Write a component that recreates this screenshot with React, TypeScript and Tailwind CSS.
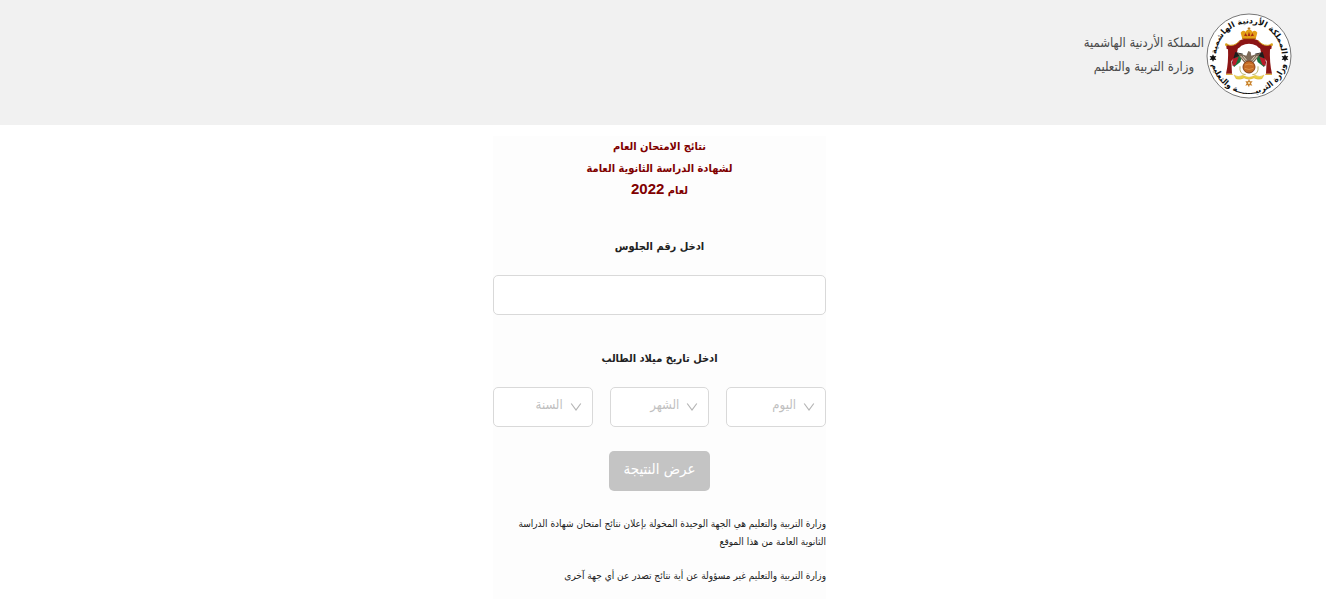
import { useState } from "react";

const days = Array.from({ length: 31 }, (_, i) => i + 1);
const months = Array.from({ length: 12 }, (_, i) => i + 1);
const years = Array.from({ length: 60 }, (_, i) => 2006 - i);

function Emblem() {
  return (
    <svg viewBox="0 0 258 258" className="size-[86px] shrink-0" role="img" aria-label="شعار المملكة">
      <defs>
        <path id="ring-top" d="M31 129 A98 98 0 0 1 227 129" />
        <path id="ring-bottom" d="M15 129 A114 114 0 0 0 243 129" />
      </defs>
      <circle cx="129" cy="129" r="126" fill="#fff" stroke="#777" strokeWidth="3" />
      <g fill="#111" fontFamily="DejaVu Sans, sans-serif" fontWeight="700" fontSize="24" textAnchor="middle">
        <text>
          <textPath href="#ring-top" startOffset="50%">
            المملكة الأردنية الهاشمية
          </textPath>
        </text>
        <text>
          <textPath href="#ring-bottom" startOffset="50%">
            وزارة التربيـــــــة والتعليم
          </textPath>
        </text>
      </g>
      <g fill="#111">
        <path d="M21 124l3 6 7-1-4 6 4 6-7-1-3 6-3-6-7 1 4-6-4-6 7 1Z" />
        <path d="M237 124l3 6 7-1-4 6 4 6-7-1-3 6-3-6-7 1 4-6-4-6 7 1Z" />
      </g>
      {/* mantle */}
      <path d="M60 94Q86 104 102 82Q129 70 156 82Q172 104 198 94L196 108Q166 116 152 98Q129 86 106 98Q92 116 62 108Z" fill="#8c1515" />
      <path d="M66 106Q86 110 96 102Q94 128 76 144L78 182H60Q68 150 66 106Z" fill="#8c1515" />
      <path d="M192 106Q172 110 162 102Q164 128 182 144L180 182H198Q190 150 192 106Z" fill="#8c1515" />
      <path d="M60 94Q86 104 102 82M198 94Q172 104 156 82M60 184h20M178 184h20" fill="none" stroke="#d9a21b" strokeWidth="3" />
      <circle cx="61" cy="95" r="4" fill="#d9a21b" />
      <circle cx="197" cy="95" r="4" fill="#d9a21b" />
      {/* crown */}
      <path d="M109 78L104 59Q110 49 119 56Q124 48 129 50Q134 48 139 56Q148 49 154 59L149 78Z" fill="#e3a018" />
      <path d="M114 68L119 60L124 70ZM144 68L139 60L134 70ZM129 56L133 69H125Z" fill="#a72a14" />
      <path d="M129 43v8M125 46h8M109 77h40" stroke="#b36b0b" strokeWidth="3" />
      {/* flags and eagle */}
      <path d="M88 117L111 122L98 137L84 162L78 149Z" fill="#1d1d1d" />
      <path d="M87 134L110 124L103 147L84 162Z" fill="#17733c" />
      <path d="M80 137L98 131L89 155L79 158Z" fill="#b91c2a" />
      <path d="M170 117L147 122L160 137L174 162L180 149Z" fill="#1d1d1d" />
      <path d="M171 134L148 124L155 147L174 162Z" fill="#17733c" />
      <path d="M178 137L160 131L169 155L179 158Z" fill="#b91c2a" />
      <path d="M94 119L121 128L127 114L134 117L136 128L164 119L153 137L140 152H118L105 137Z" fill="#7d6a58" />
      <path d="M104 129L119 146M154 129L139 146M112 130L122 142M146 130L136 142" stroke="#e6d9c4" strokeWidth="3" />
      <circle cx="129" cy="162" r="18" fill="#c46b25" stroke="#86431c" strokeWidth="3" />
      <path d="M117 156Q129 150 141 156M116 166Q129 173 142 166" fill="none" stroke="#e6a35b" strokeWidth="2" />
      <path d="M102 160Q99 184 119 185M156 160Q159 184 139 185" fill="none" stroke="#b9b46a" strokeWidth="3" />
      {/* ribbon and star */}
      <path d="M84 186Q96 195 110 187Q129 198 148 187Q162 195 174 186L168 197Q154 201 144 195Q129 203 114 195Q104 201 90 197Z" fill="#ead044" stroke="#c99e22" strokeWidth="1" />
      <path d="M129 198L132 205L140 205L135 211L139 218L131 216L129 223L125 216L118 218L122 211L118 205L126 205Z" fill="#c9822d" />
      <circle cx="129" cy="210" r="3" fill="#fff3c4" />
    </svg>
  );
}

type DateSelectProps = {
  label: string;
  options: number[];
  value: string;
  onChange: (value: string) => void;
};

function DateSelect({ label, options, value, onChange }: DateSelectProps) {
  return (
    <div className="relative">
      <select
        aria-label={label}
        value={value}
        onChange={(event) => onChange(event.target.value)}
        className="block h-10 w-full appearance-none rounded-[5px] border border-[#d9d9d9] bg-white ps-[29px] pe-2 pb-1 text-[13px] text-[#bfbfbf] outline-none focus:border-[#8c8c8c]"
      >
        <option value="">{label}</option>
        {options.map((option) => (
          <option key={option} value={option}>
            {option}
          </option>
        ))}
      </select>
      <svg
        viewBox="0 0 12 12"
        className="pointer-events-none absolute start-[11px] top-[14px] size-3"
        fill="none"
        stroke="#b5b5b5"
        strokeWidth="1.2"
        aria-hidden="true"
      >
        <path d="M1.2 2.5L6 9L10.8 2.5" />
      </svg>
    </div>
  );
}

export default function App() {
  const [seat, setSeat] = useState("");
  const [day, setDay] = useState("");
  const [month, setMonth] = useState("");
  const [year, setYear] = useState("");
  const ready = seat && day && month && year;

  return (
    <div
      dir="rtl"
      className="bg-white font-['DejaVu_Sans_Condensed','DejaVu_Sans',sans-serif] text-[#212121]"
    >
      <header className="flex h-[125px] items-start bg-[#f1f1f1] ps-[34px] pt-[13px]">
        <Emblem />
        <div className="pt-[18px] ps-[2px] text-center text-[13px] leading-6 text-[#4a4a4a]">
          <p>المملكة الأردنية الهاشمية</p>
          <p>وزارة التربية والتعليم</p>
        </div>
      </header>

      <main className="flex justify-center ps-[7px] pt-[11px]">
        <form className="w-full max-w-[333px] bg-[#fdfdfd] pb-4" onSubmit={(event) => event.preventDefault()}>
          <h1 className="text-center text-[11px] leading-[22px] font-bold text-[#800000]">
            نتائج الامتحان العام
            <br />
            لشهادة الدراسة الثانوية العامة
            <br />
            لعام <span className="font-['Liberation_Sans',sans-serif] text-[15px] leading-none">2022</span>
          </h1>

          <label htmlFor="seat" className="mt-[33px] block text-center text-[11px] leading-6 font-bold">
            ادخل رقم الجلوس
          </label>
          <input
            id="seat"
            name="seat"
            type="text"
            value={seat}
            onChange={(event) => setSeat(event.target.value)}
            className="mt-4 block h-10 w-full rounded-[5px] border border-[#d9d9d9] bg-white px-3 text-center text-[13px] outline-none focus:border-[#8c8c8c]"
          />

          <fieldset className="mt-8">
            <legend className="w-full text-center text-[11px] leading-6 font-bold">ادخل تاريخ ميلاد الطالب</legend>
            <div className="mt-4 grid grid-cols-3 gap-[17px]">
              <DateSelect label="اليوم" options={days} value={day} onChange={setDay} />
              <DateSelect label="الشهر" options={months} value={month} onChange={setMonth} />
              <DateSelect label="السنة" options={years} value={year} onChange={setYear} />
            </div>
          </fieldset>

          <button
            type="submit"
            disabled={!ready}
            className="mx-auto mt-6 block h-10 w-[101px] rounded-[5px] bg-[#800000] pb-1 text-[15px] text-white disabled:bg-[#c4c4c4]"
          >
            عرض النتيجة
          </button>

          <div className="mt-6 space-y-4 text-[10px] leading-[18px]">
            <p>وزارة التربية والتعليم هي الجهة الوحيدة المخولة بإعلان نتائج امتحان شهادة الدراسة الثانوية العامة من هذا الموقع</p>
            <p>وزارة التربية والتعليم غير مسؤولة عن أية نتائج تصدر عن أي جهة آخرى</p>
          </div>
        </form>
      </main>
    </div>
  );
}
